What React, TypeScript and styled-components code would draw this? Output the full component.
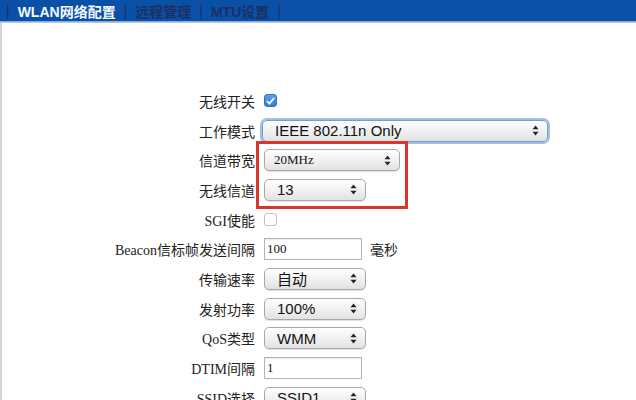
import React from "react";
import styled, {createGlobalStyle} from "styled-components";

const GlobalStyle = createGlobalStyle`
  body {
    margin: 0;
    background: #fff;
    font-family: "Liberation Serif", "Noto Sans CJK SC", serif;
  }
`;

const Page = styled.div`
  width: 636px;
  height: 400px;
  overflow: hidden;
  display: flex;
  flex-direction: column;
`;

const TopBar = styled.nav`
  height: 26px;
  background: #0b50a7;
  border-bottom: 1px solid #7fb0e6;
  display: flex;
  align-items: center;
  padding: 1px 0 0 6px;
  box-sizing: border-box;
  gap: 8px;
  font-family: "Liberation Sans", "Noto Sans CJK SC", sans-serif;
  font-size: 14px;
  font-weight: bold;
  color: #1b2f63;
`;

const NavItem = styled.span<{ $active?: boolean }>`
  color: ${p => p.$active ? "#f4f8ff" : "#1b2f63"};
`;

const Pipe = styled.span`
  color: #1b2f63;
  font-weight: normal;
`;

const SubBar = styled.div`
  height: 9px;
  background: linear-gradient(#ececec, #dcdcdc);
  border-bottom: 1px solid #c4c4c4;
`;

const Content = styled.div`
  flex: 1;
  border-left: 2px solid #d6d6d6;
  padding-top: 63px;
  position: relative;
`;

const Form = styled.div`
  display: grid;
  grid-template-columns: 256px 1fr;
  grid-auto-rows: 29.7px;
  align-items: center;
  position: relative;
`;

const Label = styled.div`
  text-align: right;
  font-size: 14px;
  color: #222;
  padding-right: 3px;
  white-space: nowrap;
`;

const Field = styled.div`
  display: flex;
  align-items: center;
  gap: 8px;
`;

const Check = styled.span<{ $checked?: boolean }>`
  width: 13px;
  height: 13px;
  margin-left: 6px;
  border-radius: 3px;
  box-sizing: border-box;
  display: inline-flex;
  align-items: center;
  justify-content: center;
  background: ${p => p.$checked ? "linear-gradient(#5aa0ee, #2f7fd9)" : "#fff"};
  border: 1px solid ${p => p.$checked ? "#2c74c8" : "#c2c2c2"};
`;

const Select = styled.div<{ $w: number; $serif?: boolean; $focus?: boolean }>`
  width: ${p => p.$w}px;
  height: 22px;
  margin-left: ${p => p.$focus ? 4 : 6}px;
  box-sizing: border-box;
  border: 1px solid ${p => p.$focus ? "#7a9cc8" : "#a8a8a8"};
  border-radius: 5px;
  background: linear-gradient(#ffffff, #f1f1f1 50%, #e2e2e2);
  box-shadow: ${p => p.$focus ? "0 0 0 2px #9fc0e8" : "0 1px 1px rgba(0,0,0,0.12)"};
  display: flex;
  align-items: center;
  justify-content: space-between;
  padding: 0 8px 0 ${p => p.$serif ? 9 : 12}px;
  font-family: ${p => p.$serif
    ? `"Liberation Serif", "Noto Sans CJK SC", serif`
    : `"Liberation Sans", "Noto Sans CJK SC", sans-serif`};
  font-size: ${p => p.$serif ? 13 : 15}px;
  color: #111;
`;

const TextInput = styled.div<{ $w: number }>`
  width: ${p => p.$w}px;
  height: 22px;
  margin-left: 6px;
  box-sizing: border-box;
  border: 1px solid #b4b4b4;
  box-shadow: inset 0 1px 1px rgba(0,0,0,0.08);
  display: flex;
  align-items: center;
  padding-left: 2px;
  font-size: 13px;
  color: #111;
`;

const Unit = styled.span`
  font-size: 14px;
  color: #222;
`;

const RedBox = styled.div`
  position: absolute;
  left: 254px;
  top: 55px;
  width: 152px;
  height: 68px;
  box-sizing: border-box;
  border: 3px solid #d8372c;
  pointer-events: none;
`;

function Arrows() {
    return (
        <svg width="7" height="11" viewBox="0 0 7 11">
            <path d="M3.5 0.5 L6.5 4.3 H0.5 Z" fill="#222"/>
            <path d="M3.5 10.5 L6.5 6.7 H0.5 Z" fill="#222"/>
        </svg>
    );
}

function Tick() {
    return (
        <svg width="9" height="8" viewBox="0 0 9 8">
            <path d="M1 4.2 L3.5 6.6 L8 1" stroke="#fff" strokeWidth="1.8" fill="none"/>
        </svg>
    );
}

export default function App() {
    const selects: [string, string, number][] = [
        ["传输速率", "自动", 102],
        ["发射功率", "100%", 102],
        ["QoS类型", "WMM", 102],
    ];

    return (
        <Page>
            <GlobalStyle/>
            <TopBar>
                <Pipe>|</Pipe>
                <NavItem $active>WLAN网络配置</NavItem>
                <Pipe>|</Pipe>
                <NavItem>远程管理</NavItem>
                <Pipe>|</Pipe>
                <NavItem>MTU设置</NavItem>
                <Pipe>|</Pipe>
            </TopBar>
            <SubBar/>
            <Content>
                <Form>
                    <Label>无线开关</Label>
                    <Field><Check $checked><Tick/></Check></Field>

                    <Label>工作模式</Label>
                    <Field>
                        <Select $w={286} $focus>IEEE 802.11n Only<Arrows/></Select>
                    </Field>

                    <Label>信道带宽</Label>
                    <Field><Select $w={136} $serif>20MHz<Arrows/></Select></Field>

                    <Label>无线信道</Label>
                    <Field><Select $w={102}>13<Arrows/></Select></Field>

                    <Label>SGI使能</Label>
                    <Field><Check/></Field>

                    <Label>Beacon信标帧发送间隔</Label>
                    <Field><TextInput $w={98}>100</TextInput><Unit>毫秒</Unit></Field>

                    {selects.map(([label, value, w]) => (
                        <React.Fragment key={label}>
                            <Label>{label}</Label>
                            <Field><Select $w={w}>{value}<Arrows/></Select></Field>
                        </React.Fragment>
                    ))}

                    <Label>DTIM间隔</Label>
                    <Field><TextInput $w={98}>1</TextInput></Field>

                    <Label>SSID选择</Label>
                    <Field><Select $w={102}>SSID1<Arrows/></Select></Field>

                    <RedBox/>
                </Form>
            </Content>
        </Page>
    );
}
